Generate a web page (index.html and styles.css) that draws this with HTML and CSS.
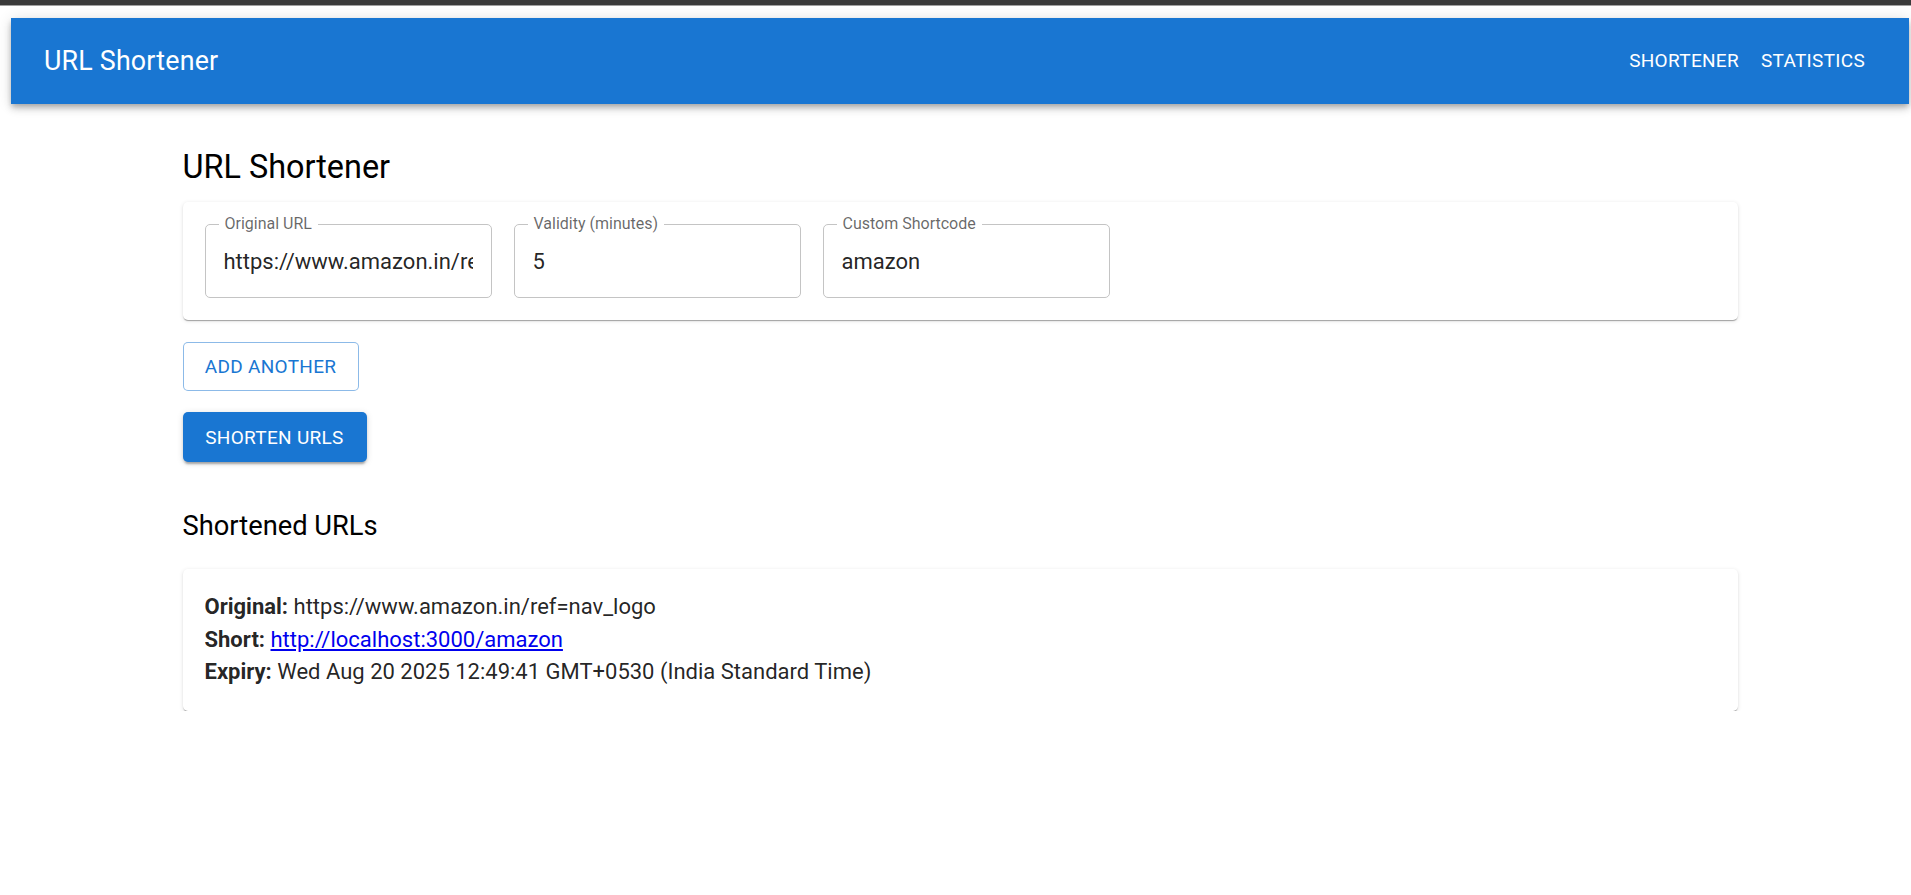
FILE: index.html
```html
<!DOCTYPE html>
<html lang="en">
<head>
<meta charset="utf-8">
<title>URL Shortener</title>
<link rel="stylesheet" href="styles.css">
</head>
<body>
<div class="topstrip"></div>
<div class="frame">
  <header class="appbar">
    <div class="brand">URL Shortener</div>
    <nav class="nav">
      <a class="navbtn" href="#">SHORTENER</a>
      <a class="navbtn" href="#">STATISTICS</a>
    </nav>
  </header>
  <main class="container">
    <h1 class="heading">URL Shortener</h1>
    <section class="card form-card">
      <div class="field">
        <span class="label">Original URL</span>
        <input class="input" type="text" value="https://www.amazon.in/ref=nav_logo">
      </div>
      <div class="field">
        <span class="label">Validity (minutes)</span>
        <input class="input" type="text" value="5">
      </div>
      <div class="field">
        <span class="label">Custom Shortcode</span>
        <input class="input" type="text" value="amazon">
      </div>
    </section>
    <div class="actions">
      <button class="btn btn-outlined">ADD ANOTHER</button>
      <button class="btn btn-contained">SHORTEN URLS</button>
    </div>
    <h2 class="subheading">Shortened URLs</h2>
    <section class="card result-card">
      <p class="line"><strong>Original:</strong> https://www.amazon.in/ref=nav_logo</p>
      <p class="line"><strong>Short:</strong> <a class="link" href="#">http://localhost:3000/amazon</a></p>
      <p class="line"><strong>Expiry:</strong> Wed Aug 20 2025 12:49:41 GMT+0530 (India Standard Time)</p>
    </section>
  </main>
</div>
</body>
</html>
```
FILE: styles.css
```css
* { box-sizing: border-box; }
html, body { margin: 0; padding: 0; background: #ffffff; }
body {
  font-family: Roboto, "Liberation Sans", Arial, sans-serif;
  color: rgba(0,0,0,0.87);
}
.topstrip {
  height: 6px;
  background: #3a3a3a;
  border-bottom: 1px solid #a0a0a0;
}
.frame {
  padding: 12px 2px 0 11px;
}
.appbar {
  height: 86px;
  background: #1976d2;
  color: #fff;
  display: flex;
  align-items: center;
  justify-content: space-between;
  padding: 0 33px 0 33px;
  box-shadow: 0 3px 5px -1px rgba(0,0,0,0.2), 0 5px 7px 0 rgba(0,0,0,0.14), 0 1px 14px 0 rgba(0,0,0,0.12);
}
.brand {
  font-size: 26.8px;
  font-weight: 400;
  letter-spacing: 0.2px;
}
.nav { display: flex; gap: 0; }
.navbtn {
  color: #fff;
  text-decoration: none;
  font-size: 19px;
  font-weight: 400;
  letter-spacing: 0.3px;
  padding: 8px 11px;
  line-height: 1.75;
}
.container {
  width: 1555px;
  margin: 0 auto;
}
.heading {
  margin: 42px 0 13px;
  font-size: 32.4px;
  font-weight: 400;
  line-height: 43px;
  color: #000;
}
.card {
  background: #fff;
  border-radius: 5px;
  box-shadow: 0 2px 1px -1px rgba(0,0,0,0.2), 0 1px 1px 0 rgba(0,0,0,0.14), 0 1px 4px 0 rgba(0,0,0,0.12);
}
.form-card {
  display: flex;
  gap: 22px;
  padding: 22px;
}
.field {
  position: relative;
  width: 287px;
  height: 74px;
  border: 1px solid #c4c4c4;
  border-radius: 5px;
  display: flex;
  align-items: center;
}
.label {
  position: absolute;
  left: 13px;
  top: -11px;
  padding: 0 6px;
  background: #fff;
  font-size: 16px;
  line-height: 20px;
  color: rgba(0,0,0,0.6);
}
.input {
  width: 100%;
  height: 100%;
  border: 0;
  outline: none;
  background: transparent;
  font-family: inherit;
  font-size: 22px;
  color: rgba(0,0,0,0.87);
  padding: 0 18px 0 18px;
}
.actions {
  display: flex;
  flex-direction: column;
  align-items: flex-start;
  gap: 21px;
  margin-top: 22px;
}
.btn {
  font-family: inherit;
  font-size: 19px;
  font-weight: 400;
  letter-spacing: 0.3px;
  border-radius: 5px;
  cursor: pointer;
}
.btn-outlined {
  width: 176px;
  height: 49px;
  background: #fff;
  color: #1976d2;
  border: 1px solid rgba(25,118,210,0.5);
}
.btn-contained {
  width: 184px;
  height: 50px;
  background: #1976d2;
  color: #fff;
  border: 0;
  box-shadow: 0 4px 2px -2px rgba(0,0,0,0.2), 0 2px 3px 0 rgba(0,0,0,0.14), 0 1px 7px 0 rgba(0,0,0,0.12);
}
.subheading {
  margin: 43px 0 21px;
  font-size: 27.3px;
  font-weight: 400;
  line-height: 43px;
  color: #000;
}
.result-card {
  padding: 22px;
}
.line {
  margin: 0;
  font-size: 22px;
  line-height: 32.6px;
  color: rgba(0,0,0,0.87);
}
.line strong { font-weight: 700; }
.link { color: #0000ee; text-decoration: underline; }
```
